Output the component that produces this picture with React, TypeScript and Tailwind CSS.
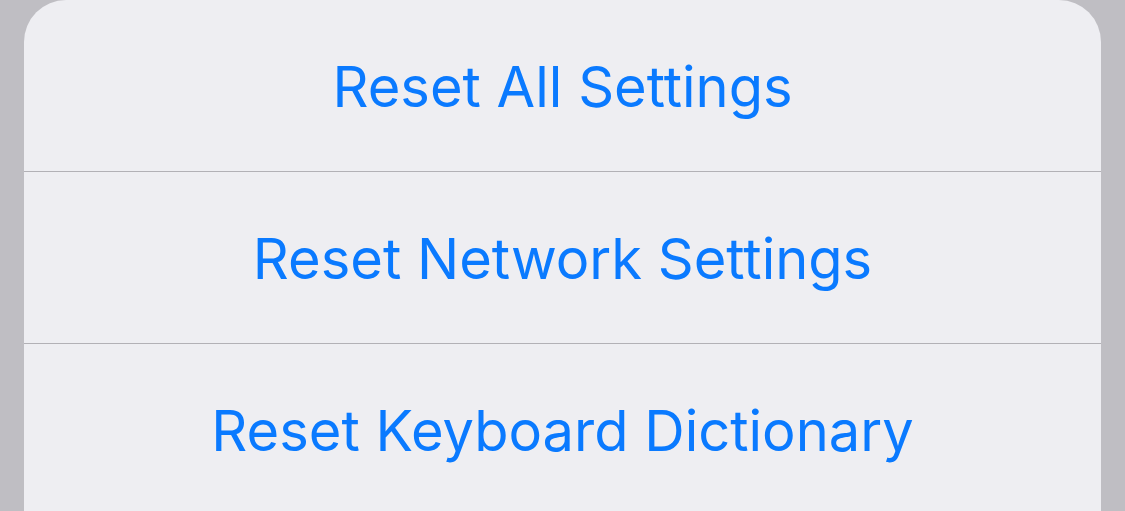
import React from "react";

const items = ["Reset All Settings", "Reset Network Settings", "Reset Keyboard Dictionary"];

export default function App() {
  return (
    <div className="w-[1125px] h-[511px] bg-[#bfbec3] overflow-hidden px-[24px]">
      <div className="bg-[#eeeef2] rounded-t-[42px] h-[600px] flex flex-col">
        {items.map((t, i) => (
          <div key={t} className="flex flex-col">
            {i > 0 && <div className="h-px bg-[#b2b1b6]" />}
            <div className="h-[171px] flex items-center justify-center pt-[2px]">
              <span
                className="text-[#0a7aff] text-[56px] leading-none tracking-[0px]"
                style={{ fontFamily: "Inter, 'Noto Sans', sans-serif" }}
              >
                {t}
              </span>
            </div>
          </div>
        ))}
      </div>
    </div>
  );
}
